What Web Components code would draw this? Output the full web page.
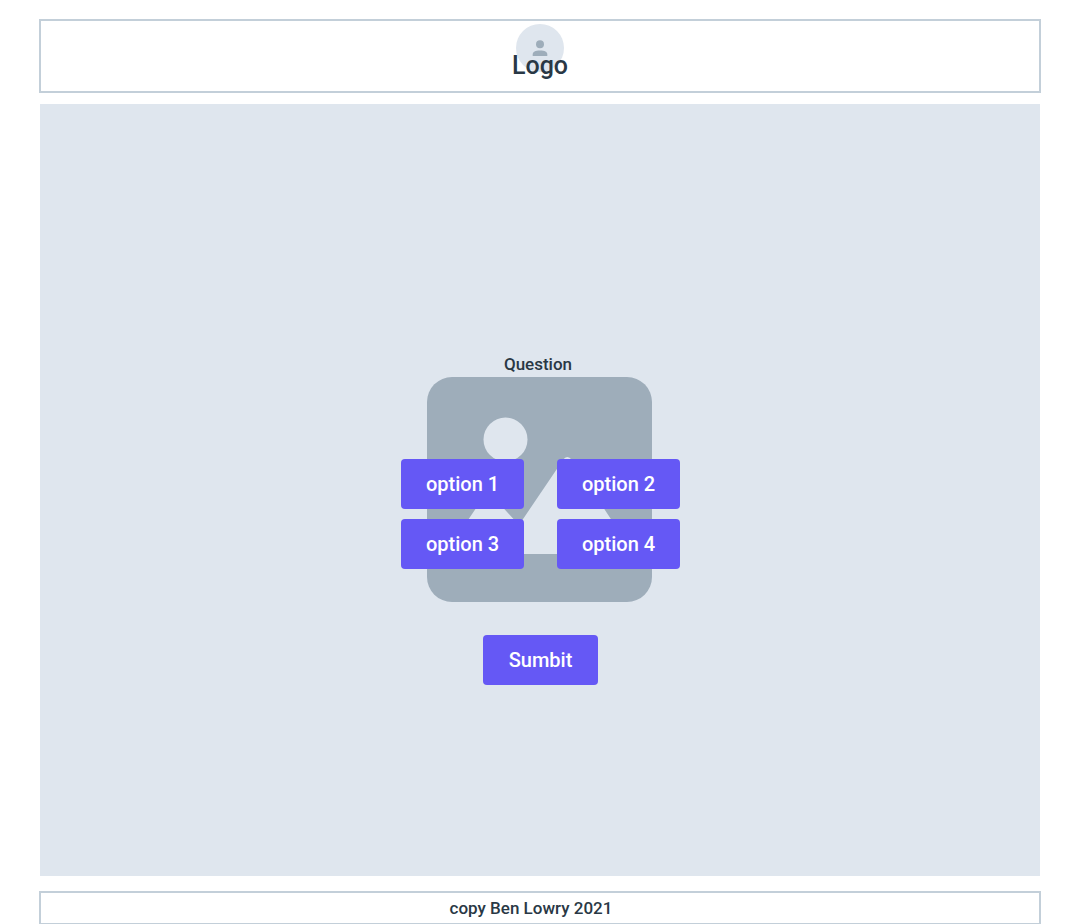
<!DOCTYPE html>
<html lang="en">
<head>
<meta charset="utf-8">
<meta name="viewport" content="width=device-width, initial-scale=1">
<title>Quiz</title>
<style>
  :root { --line: #c3cfd9; --panel: #dfe6ee; --muted: #9eadba; --ink: #293845; --accent: #6558f5; }
  body { margin: 0; background: #fff; color: var(--ink); font: 500 17px/24px Roboto, "Liberation Sans", sans-serif; }
</style>
</head>
<body>
<quiz-page>
  <site-header slot="header">Logo</site-header>
  <quiz-question>
    <span slot="question">Question</span>
    <picture-placeholder slot="picture"></picture-placeholder>
    <quiz-button slot="option">option 1</quiz-button>
    <quiz-button slot="option">option 2</quiz-button>
    <quiz-button slot="option">option 3</quiz-button>
    <quiz-button slot="option">option 4</quiz-button>
    <quiz-button slot="submit">Sumbit</quiz-button>
  </quiz-question>
  <site-footer slot="footer">copy Ben Lowry 2021</site-footer>
</quiz-page>
<script>
const define = (name, html) => customElements.define(name, class extends HTMLElement {
  constructor() {
    super();
    this.attachShadow({ mode: "open" }).innerHTML = html;
  }
});

define("quiz-page", `
  <style>
    :host { display: flex; flex-direction: column; box-sizing: border-box; min-height: 100vh; padding: 19px 39px 0; }
    main { flex: 1; display: grid; margin: 11px 1px 15px; background: var(--panel); }
  </style>
  <slot name="header"></slot>
  <main><slot></slot></main>
  <slot name="footer"></slot>`);

define("site-header", `
  <style>
    :host { display: block; }
    header { display: grid; justify-items: center; border: 2px solid var(--line); padding: 3px 0 9px; }
    svg, h1 { grid-area: 1 / 1; }
    h1 { margin: 26px 0 0; font-size: 25px; line-height: 32px; font-weight: 500; }
  </style>
  <header>
    <svg width="48" height="48" viewBox="0 0 48 48" aria-hidden="true">
      <circle cx="24" cy="24" r="24" fill="#dfe6ee"/>
      <g fill="#9eadba"><circle cx="24" cy="20.3" r="4"/>
      <path d="M16.700 32v-1.500c0-2.700 2.500-4 7.300-4s7.300 1.300 7.300 4V32z"/></g>
    </svg>
    <h1><slot></slot></h1>
  </header>`);

define("site-footer", `
  <style>
    :host { display: block; }
    footer { border: 2px solid var(--line); border-bottom-width: 1px; padding: 3px 18px 3px 0; text-align: center; }
  </style>
  <footer><slot></slot></footer>`);

define("picture-placeholder", `
  <style>:host, svg { display: block; }</style>
  <svg width="225" height="225" viewBox="0 0 225 225" role="img" aria-label="Picture">
    <rect width="225" height="225" rx="25" fill="#9eadba"/>
    <g fill="#dfe6ee"><circle cx="78.500" cy="62.500" r="22"/>
    <path d="M28 177Q18 177 24 168L58 118Q63 112 69 123L92 148L136 83Q140 77 145 83L201 168Q205 177 196 177Z"/></g>
  </svg>`);

define("quiz-button", `
  <style>
    :host { display: block; }
    button { display: block; width: 100%; border: 0; border-radius: 4px; padding: 13px 25px; background: var(--accent); color: #fff; font: inherit; font-size: 20px; line-height: 24px; white-space: nowrap; cursor: pointer; }
  </style>
  <button type="button"><slot></slot></button>`);

define("quiz-question", `
  <style>
    :host { display: grid; }
    form { display: grid; grid-template-rows: 1fr auto 1fr; justify-items: center; padding-bottom: 1px; }
    h2 { align-self: end; margin: 0; padding: 0 4px 1px 0; font: inherit; }
    .picture { grid-area: 2 / 1; margin-right: 1px; }
    .options { grid-area: 2 / 1; align-self: center; display: grid; grid-template-columns: 123px 123px; gap: 10px 33px; margin: 49px 0 0 1px; }
    .submit { grid-area: 3 / 1; align-self: start; width: 115px; margin: 33px 0 0 1px; }
  </style>
  <form>
    <h2><slot name="question"></slot></h2>
    <div class="picture"><slot name="picture"></slot></div>
    <div class="options"><slot name="option"></slot></div>
    <div class="submit"><slot name="submit"></slot></div>
  </form>`);
</script>
</body>
</html>
